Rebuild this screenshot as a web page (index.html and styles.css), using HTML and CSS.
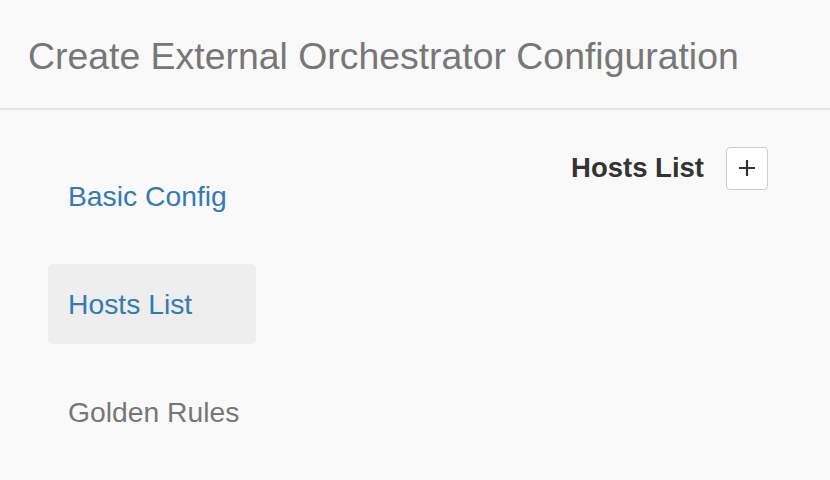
FILE: index.html
```html
<!DOCTYPE html>
<html>
<head>
<meta charset="utf-8">
<link rel="stylesheet" href="styles.css">
</head>
<body>
<div class="page">
  <header class="header">
    <h1 class="title">Create External Orchestrator Configuration</h1>
  </header>
  <div class="content">
    <nav class="nav">
      <a class="nav-item link">Basic Config</a>
      <a class="nav-item link active">Hosts List</a>
      <a class="nav-item muted">Golden Rules</a>
    </nav>
    <section class="panel">
      <div class="panel-head">
        <h2 class="panel-title">Hosts List</h2>
        <button class="add-btn" aria-label="Add">
          <svg width="18" height="18" viewBox="0 0 18 18"><path d="M9 1v16M1 9h16" stroke="#333" stroke-width="2.2" fill="none"/></svg>
        </button>
      </div>
    </section>
  </div>
</div>
</body>
</html>
```
FILE: styles.css
```css
html, body {
  margin: 0;
  padding: 0;
  background: #f9f9f9;
  font-family: "Liberation Sans", Arial, sans-serif;
}
.page {
  width: 830px;
  height: 480px;
  overflow: hidden;
}
.header {
  height: 110px;
  border-bottom: 2px solid #e5e5e5;
  box-sizing: border-box;
  padding-left: 28px;
  padding-top: 4px;
  display: flex;
  align-items: center;
}
.title {
  margin: 0;
  font-size: 37.4px;
  font-weight: normal;
  color: #777;
}
.content {
  display: flex;
  padding-left: 48px;
}
.nav {
  width: 208px;
  display: flex;
  flex-direction: column;
  gap: 28px;
  padding-top: 46px;
}
.nav-item {
  height: 80px;
  display: flex;
  align-items: center;
  padding-left: 20px;
  border-radius: 5px;
  font-size: 28.3px;
  text-decoration: none;
}
.link { color: #337ab7; }
.muted { color: #777; }
.active { background: #eeeeee; }
.panel {
  flex: 1;
  display: flex;
  justify-content: flex-end;
  padding-right: 62px;
  padding-top: 36px;
}
.panel-head {
  display: flex;
  align-items: center;
  gap: 22px;
  height: 44px;
}
.panel-title {
  margin: 0;
  font-size: 27.5px;
  font-weight: bold;
  color: #333;
}
.add-btn {
  width: 42px;
  height: 43px;
  background: #fff;
  border: 1px solid #ccc;
  border-radius: 4px;
  display: flex;
  align-items: center;
  justify-content: center;
  padding: 0;
}
```
